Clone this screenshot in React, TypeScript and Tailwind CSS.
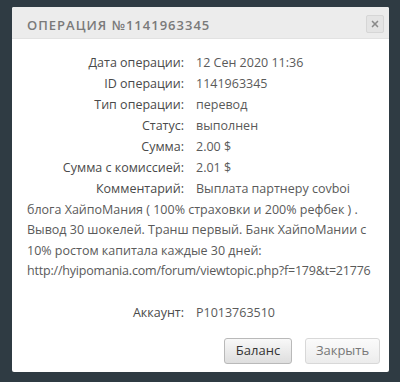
import { X } from "lucide-react";

const rows: [string, string][] = [
  ["Дата операции:", "12 Сен 2020 11:36"],
  ["ID операции:", "1141963345"],
  ["Тип операции:", "перевод"],
  ["Статус:", "выполнен"],
  ["Сумма:", "2.00 $"],
  ["Сумма с комиссией:", "2.01 $"],
];

const App = () => {
  return (
    <div
      className="w-[400px] h-[382px] bg-[#2f3b43] pt-[7px] pl-[12px]"
      style={{ fontFamily: "'Open Sans', 'Liberation Sans', sans-serif" }}
    >
      <div className="w-[377px] h-[365px] bg-white rounded-[2px] flex flex-col overflow-hidden">
        {/* Header */}
        <div className="h-[32px] bg-[#ececec] border-b border-[#e2e2e2] flex items-center justify-between pl-[15px] pr-[5px] pt-[2px]">
          <span className="text-[13px] font-semibold tracking-[1px] text-[#7a7a7a] mt-[4px]">
            ОПЕРАЦИЯ №1141963345
          </span>
          <button
            type="button"
            className="w-[18px] h-[18px] bg-[#e4e4e4] border border-[#d6d6d6] rounded-[2px] flex items-center justify-center"
          >
            <X size={10} strokeWidth={4} className="text-[#8a8a8a]" />
          </button>
        </div>

        {/* Body */}
        <div className="flex-1 pt-[13px] px-[15px] text-[12.5px] text-[#555] leading-[21px]">
          {rows.map(([label, value]) => (
            <div key={label} className="flex">
              <span className="w-[157px] text-right text-[#4a4a4a]">{label}</span>
              <span className="pl-[12px] text-[#5a5a5a]">{value}</span>
            </div>
          ))}
          <p className="text-[#5a5a5a] leading-[20.6px] mt-[1px]">
            <span className="inline-block w-[157px] text-right text-[#4a4a4a]">
              Комментарий:
            </span>
            <span className="pl-[12px]">Выплата партнеру covboi</span>
            <br />
            блога ХайпоМания ( 100% страховки и 200% рефбек ) .
            <br />
            Вывод 30 шокелей. Транш первый. Банк ХайпоМании с
            <br />
            10% ростом капитала каждые 30 дней:
            <br />
            <span className="whitespace-nowrap tracking-[-0.2px]">
              http://hyipomania.com/forum/viewtopic.php?f=179&amp;t=21776
            </span>
          </p>
          <div className="flex mt-[20px]">
            <span className="w-[157px] text-right text-[#4a4a4a]">Аккаунт:</span>
            <span className="pl-[12px] text-[#5a5a5a]">P1013763510</span>
          </div>
        </div>

        {/* Footer */}
        <div className="flex justify-end gap-[13px] pr-[9px] pb-[8px]">
          <button
            type="button"
            className="w-[68px] h-[26px] rounded-[3px] border border-[#b9b9b9] bg-gradient-to-b from-[#f8f8f8] to-[#dedede] text-[13px] text-[#333]"
          >
            Баланс
          </button>
          <button
            type="button"
            className="w-[75px] h-[26px] rounded-[3px] border border-[#d8d8d8] bg-gradient-to-b from-[#fbfbfb] to-[#ececec] text-[13px] text-[#777]"
          >
            Закрыть
          </button>
        </div>
      </div>
    </div>
  );
};

export default App;
